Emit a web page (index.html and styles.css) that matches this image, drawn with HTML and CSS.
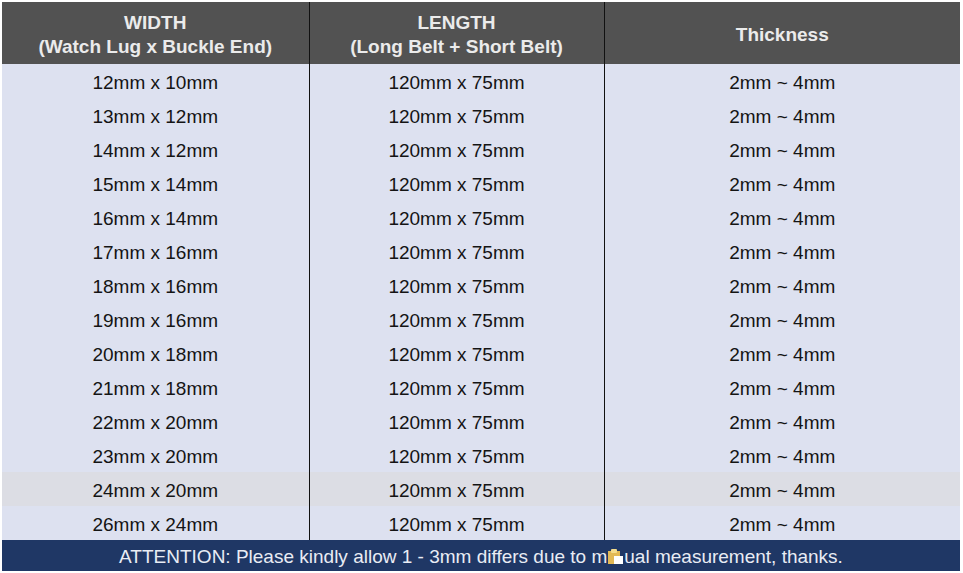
FILE: index.html
```html
<!DOCTYPE html>
<html>
<head>
<meta charset="utf-8">
<link rel="stylesheet" href="styles.css">
</head>
<body>
<div class="sheet">
  <table class="size-table">
    <colgroup>
      <col class="c1"><col class="c2"><col class="c3">
    </colgroup>
    <thead>
      <tr>
        <th>WIDTH<br>(Watch Lug x Buckle End)</th>
        <th>LENGTH<br>(Long Belt + Short Belt)</th>
        <th>Thickness</th>
      </tr>
    </thead>
    <tbody>
      <tr><td>12mm x 10mm</td><td>120mm x 75mm</td><td>2mm ~ 4mm</td></tr>
      <tr><td>13mm x 12mm</td><td>120mm x 75mm</td><td>2mm ~ 4mm</td></tr>
      <tr><td>14mm x 12mm</td><td>120mm x 75mm</td><td>2mm ~ 4mm</td></tr>
      <tr><td>15mm x 14mm</td><td>120mm x 75mm</td><td>2mm ~ 4mm</td></tr>
      <tr><td>16mm x 14mm</td><td>120mm x 75mm</td><td>2mm ~ 4mm</td></tr>
      <tr><td>17mm x 16mm</td><td>120mm x 75mm</td><td>2mm ~ 4mm</td></tr>
      <tr><td>18mm x 16mm</td><td>120mm x 75mm</td><td>2mm ~ 4mm</td></tr>
      <tr><td>19mm x 16mm</td><td>120mm x 75mm</td><td>2mm ~ 4mm</td></tr>
      <tr><td>20mm x 18mm</td><td>120mm x 75mm</td><td>2mm ~ 4mm</td></tr>
      <tr><td>21mm x 18mm</td><td>120mm x 75mm</td><td>2mm ~ 4mm</td></tr>
      <tr><td>22mm x 20mm</td><td>120mm x 75mm</td><td>2mm ~ 4mm</td></tr>
      <tr><td>23mm x 20mm</td><td>120mm x 75mm</td><td>2mm ~ 4mm</td></tr>
      <tr class="alt"><td>24mm x 20mm</td><td>120mm x 75mm</td><td>2mm ~ 4mm</td></tr>
      <tr><td>26mm x 24mm</td><td>120mm x 75mm</td><td>2mm ~ 4mm</td></tr>
    </tbody>
  </table>
  <div class="note">ATTENTION: Please kindly allow 1 - 3mm differs due to m<svg class="clip" width="17" height="17" viewBox="0 0 17 17"><rect x="1" y="3" width="12" height="13" fill="#e2b955"/><rect x="4" y="1" width="6" height="4" rx="1" fill="#f4dc8c"/><rect x="7" y="8" width="9" height="8" fill="#ffffff"/></svg>ual measurement, thanks.</div>
</div>
</body>
</html>
```
FILE: styles.css
```css
html, body {
  margin: 0;
  padding: 0;
  background: #ffffff;
}

.sheet {
  width: 958px;
  margin: 2px 0 0 2px;
  font-family: "Liberation Sans", Arial, sans-serif;
}

.size-table {
  width: 958px;
  border-collapse: collapse;
  table-layout: fixed;
}

.c1 { width: 307px; }
.c2 { width: 295px; }
.c3 { width: 356px; }

.size-table th {
  box-sizing: border-box;
  height: 62px;
  padding: 4px 0 0;
  background: #525252;
  color: #ebebeb;
  font-weight: bold;
  font-size: 19px;
  line-height: 24px;
  text-align: center;
  vertical-align: middle;
}

.size-table td {
  box-sizing: border-box;
  height: 34px;
  padding: 3px 0 0;
  background: #dde1f0;
  color: #141414;
  font-size: 19px;
  line-height: 31px;
  text-align: center;
}

.size-table th:not(:last-child),
.size-table td:not(:last-child) {
  border-right: 1px solid #111111;
}

.size-table tr.alt td {
  background: #dcdde4;
}

.note {
  box-sizing: border-box;
  height: 31px;
  padding-top: 2px;
  background: #1f3765;
  color: #e9ecf4;
  font-size: 19px;
  line-height: 29px;
  text-align: center;
}

.clip {
  vertical-align: -2px;
}
```
